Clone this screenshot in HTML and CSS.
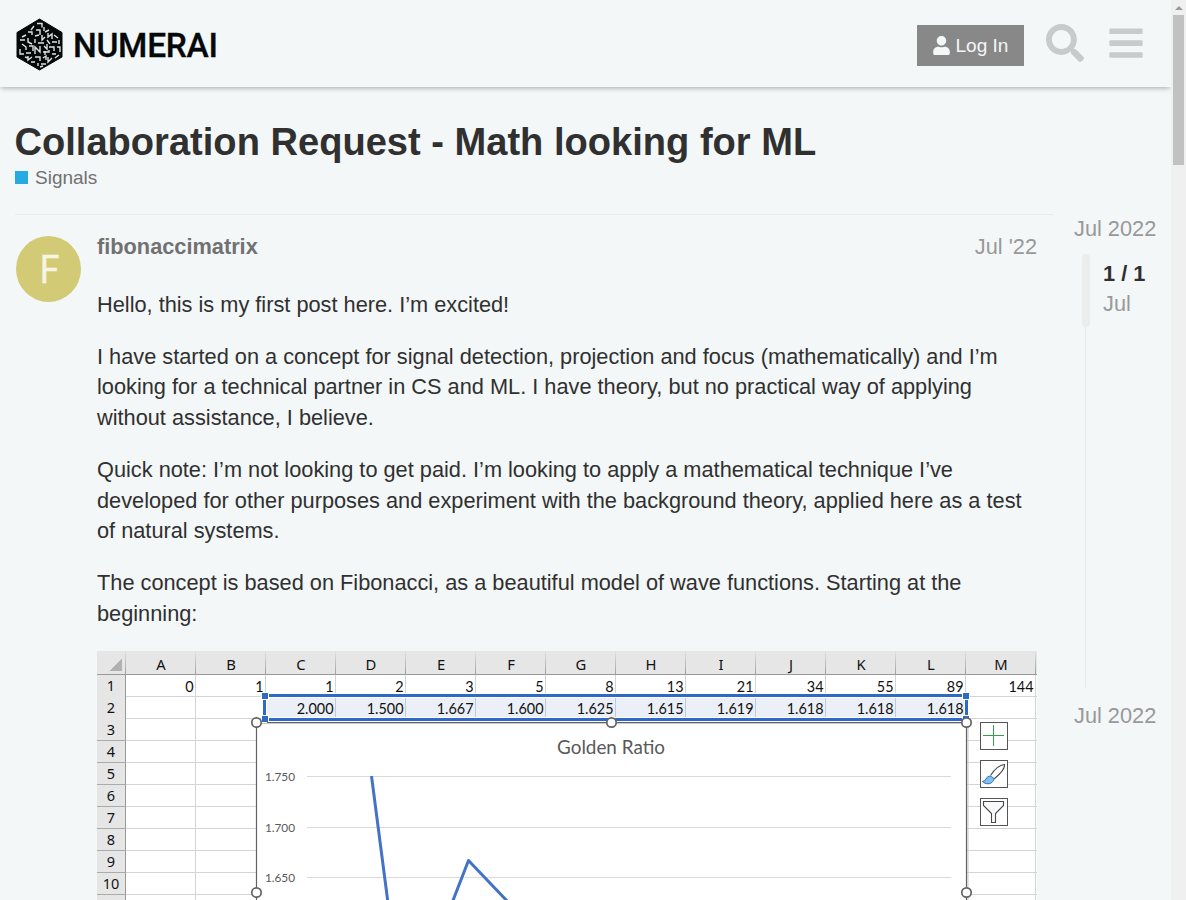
FILE: index.html
```html
<!DOCTYPE html>
<html lang="en">
<head>
<meta charset="utf-8">
<title>Collaboration Request - Math looking for ML</title>
<link rel="stylesheet" href="styles.css">
</head>
<body>
<div class="window">
  <div class="page">
    <header class="header">
      <svg class="logo" width="202" height="54" viewBox="0 0 202 54" role="img" aria-label="Numerai">
        <path d="M23.5 1 46 14.500V39L23.500 52 1 39V14.500Z" fill="#06090a" stroke="#06090a" stroke-width="1" stroke-linejoin="round"/>
        <path d="M21 5.500h5v4M18 8l-3 4M28 9v4M20 12h4v5M29 14l4-2M12 14h4v3M10 17l-4 2M19 18l4-1M32 15v4l4-3v5M38 17l4 3M26 17v5l3-3M4 22h5M12 20v4l4 2M19 21v4M22 25h6M31 22l3 4M36 24h5M43 22v4M6 26l4 3v3M13 28h4v5M19 36v-7l5 5v-6M28 28l3 3v-5M33 29h5v4M41 29h3v5M4 31v5h4M10 35h5M27 34h6v-2M29 37v-4M36 36h4M43 37l-4 3M12 38v4l4-3M19 39h5v4M27 40l3-2v4M32 39v5l4-4M15 44h4M22 45v3M25 46h5M9 39l3 1M24 49l3-1" fill="none" stroke="#dfe3e4" stroke-width="1.400"/>
        <text x="57" y="38.700" textLength="145" class="wordmark">NUMERAI</text>
      </svg>
      <div class="header-actions">
        <button class="login"><svg class="user-icon" viewBox="0 0 448 512"><path d="M224 256c70.700 0 128-57.300 128-128S294.700 0 224 0 96 57.300 96 128s57.300 128 128 128zm89.600 32h-16.700c-22.200 10.200-46.900 16-72.900 16s-50.600-5.800-72.900-16h-16.700C60.200 288 0 348.200 0 422.400V464c0 26.500 21.500 48 48 48h352c26.500 0 48-21.500 48-48v-41.600c0-74.200-60.200-134.400-134.400-134.400z"/></svg><span>Log In</span></button>
        <svg class="search-icon" viewBox="0 0 512 512"><path d="M505 442.700L405.300 343c-4.500-4.500-10.600-7-17-7H372c27.600-35.300 44-79.700 44-128C416 93.100 322.900 0 208 0S0 93.100 0 208s93.100 208 208 208c48.300 0 92.700-16.400 128-44v16.300c0 6.400 2.500 12.500 7 17l99.700 99.700c9.400 9.400 24.600 9.400 33.900 0l28.300-28.300c9.400-9.400 9.400-24.600.1-34zM208 336c-70.700 0-128-57.200-128-128 0-70.700 57.200-128 128-128 70.700 0 128 57.200 128 128 0 70.700-57.200 128-128 128z"/></svg>
        <svg class="menu-icon" viewBox="0 0 448 512"><rect y="60" width="448" height="76" rx="16"/><rect y="220" width="448" height="76" rx="16"/><rect y="380" width="448" height="76" rx="16"/></svg>
      </div>
    </header>
    <section class="topic-title">
      <h1>Collaboration Request - Math looking for ML</h1>
      <div class="category"><span class="category-badge"></span>Signals</div>
    </section>
    <div class="topic">
      <article class="post">
        <div class="avatar"><svg viewBox="0 0 66 66"><text x="34" y="47.500" text-anchor="middle" textLength="20" lengthAdjust="spacingAndGlyphs">F</text></svg></div>
        <div class="post-body">
          <div class="post-meta"><b>fibonaccimatrix</b><span>Jul '22</span></div>
          <div class="cooked">
            <p>Hello, this is my first post here. I’m excited!</p>
            <p>I have started on a concept for signal detection, projection and focus (mathematically) and I’m<br>looking for a technical partner in CS and ML. I have theory, but no practical way of applying<br>without assistance, I believe.</p>
            <p>Quick note: I’m not looking to get paid. I’m looking to apply a mathematical technique I’ve<br>developed for other purposes and experiment with the background theory, applied here as a test<br>of natural systems.</p>
            <p>The concept is based on Fibonacci, as a beautiful model of wave functions. Starting at the<br>beginning:</p>
          </div>
          <div class="sheet">
            <div class="row columns"><span class="corner"></span><span>A</span><span>B</span><span>C</span><span>D</span><span>E</span><span>F</span><span>G</span><span>H</span><span>I</span><span>J</span><span>K</span><span>L</span><span>M</span><i></i></div>
            <div class="row"><b>1</b><span>0</span><span>1</span><span>1</span><span>2</span><span>3</span><span>5</span><span>8</span><span>13</span><span>21</span><span>34</span><span>55</span><span>89</span><span>144</span></div>
            <div class="row ratios"><b>2</b><span></span><span></span><span>2.000</span><span>1.500</span><span>1.667</span><span>1.600</span><span>1.625</span><span>1.615</span><span>1.619</span><span>1.618</span><span>1.618</span><span>1.618</span><span></span></div>
            <div class="row"><b>3</b></div>
            <div class="row"><b>4</b></div>
            <div class="row"><b>5</b></div>
            <div class="row"><b>6</b></div>
            <div class="row"><b>7</b></div>
            <div class="row"><b>8</b></div>
            <div class="row"><b>9</b></div>
            <div class="row"><b>10</b></div>
            <div class="row"><b></b></div>
            <svg class="chart" width="940" height="249" viewBox="97 651 940 249">
              <rect x="257" y="723" width="710" height="190" fill="#fff"/>
              <path d="M257 723.500H967M968 723V900" stroke="#c8c8c8" fill="none"/>
              <path d="M256.500 900V722.500H966.500V900" stroke="#636363" stroke-width="1.200" fill="none"/>
              <path d="M307 776.500H951M307 827.500H951M307 877.500H951" stroke="#d9d9d9"/>
              <path d="M371.500 776 388 903M452 903 468.500 860.500 509 903" fill="none" stroke="#4472c4" stroke-width="3" stroke-linejoin="round"/>
              <text x="557" y="753.500" textLength="108" lengthAdjust="spacingAndGlyphs" class="chart-title">Golden Ratio</text>
              <g class="axis"><text x="265" y="781" textLength="30">1.750</text><text x="265" y="832" textLength="30">1.700</text><text x="265" y="882" textLength="30">1.650</text></g>
              <path d="M264.500 695.500H966.500V719.500H264.500Z" fill="none" stroke="#fff" stroke-width="5"/>
              <path d="M264.500 695.500H966.500V719.500H264.500Z" fill="none" stroke="#2f69c7" stroke-width="3"/>
              <g fill="#2f69c7" stroke="#fff"><rect x="261.500" y="692.500" width="7" height="7"/><rect x="962.500" y="692.500" width="7" height="7"/><rect x="261.500" y="715.500" width="7" height="7"/><rect x="962.500" y="715.500" width="7" height="7"/></g>
              <path d="M267 722.500H964" stroke="#636363"/>
              <g fill="#fff" stroke="#636363" stroke-width="1.700"><circle cx="256.500" cy="722.500" r="4.700"/><circle cx="611.500" cy="722.500" r="4.700"/><circle cx="966.500" cy="722.500" r="4.700"/><circle cx="256.500" cy="892.500" r="4.700"/><circle cx="966.500" cy="892.500" r="4.700"/></g>
              <g fill="#fff" stroke="#555"><rect x="980.500" y="722.500" width="27" height="27"/><rect x="980.500" y="760.500" width="27" height="27"/><rect x="980.500" y="798.500" width="27" height="27"/></g>
              <path d="M983 735.500H1004M993.500 725V746" stroke="#35a04b"/>
              <path d="M990.500 775.500C994 770 999.500 765 1004.500 764.500C1005 768.500 999 775 994 779" fill="#fff" stroke="#484848" stroke-width="1.100"/>
              <path d="M982.500 781.500C986.500 781.500 985.500 776.500 989.500 776.200C992.500 776 995 779 992.800 781.500C990.500 784.500 985.500 784.500 982.500 781.500Z" fill="#83beec" stroke="#1e6fb8"/>
              <path d="M983.500 801.500H1003.500V805.500L995.500 813.500V822.500H991.500V813.500L983.500 805.500Z" fill="#f8f9fb" stroke="#484848" stroke-width="1.100"/>
            </svg>
          </div>
        </div>
      </article>
      <aside class="timeline">
        <div class="date">Jul 2022</div>
        <div class="scrollarea"><span class="handle"></span><div class="progress"><b>1 / 1</b><span>Jul</span></div></div>
        <div class="date">Jul 2022</div>
      </aside>
    </div>
  </div>
  <div class="scrollbar"><span class="arrow"></span><span class="thumb"></span></div>
</div>
</body>
</html>
```

FILE: styles.css
```css
* { box-sizing: border-box; }
body { margin: 0; background: #f3f7f8; color: #303030; font-family: "Liberation Sans", Arial, sans-serif; font-size: 21.760px; line-height: 30.600px; }
.window { display: flex; height: 900px; overflow: hidden; }
.page { width: 1171px; height: 900px; overflow: hidden; }
.header { height: 87px; padding: 0 28px 0 16px; display: flex; justify-content: space-between; align-items: center; background: #f3f7f8; box-shadow: 0 2px 5px -1px rgba(0,0,0,.32); }
.logo { overflow: visible; margin-top: 2px; }
.wordmark { font: 500 33.500px Roboto, sans-serif; fill: #06090a; stroke: #06090a; stroke-width: .3px; }
.header-actions { display: flex; align-items: center; height: 87px; padding-top: 2px; }
.header-actions svg { fill: #c8cacb; display: block; }
.login { width: 107px; height: 41px; margin: 2px 22px 0 0; border: 0; padding: 0 0 0 16px; background: #888; color: #f3f7f8; font: 19.040px "Liberation Sans", Arial, sans-serif; display: flex; align-items: center; gap: 5.500px; }
.login .user-icon { width: 17px; height: 19px; fill: #f3f7f8; }
.login span { white-space: nowrap; }
.search-icon { width: 38px; height: 38px; margin: -3px 25px 0 0; }
.menu-icon { width: 34px; height: 38px; margin-top: -3px; }
.topic-title { height: 127px; padding: 33px 15px 0; }
h1 { margin: 0 0 0 -.5px; font-size: 38.080px; line-height: 44px; font-weight: 700; }
.category { display: flex; align-items: center; gap: 7px; color: #717171; font-size: 19px; line-height: 27px; }
.category-badge { width: 13px; height: 13px; background: #25aae2; }
.topic { display: flex; }
.post { width: 1038px; margin-left: 15px; border-top: 1px solid #e9ebec; display: flex; gap: 16px; padding: 17px 15px 0 1px; }
.avatar { flex: none; width: 65px; height: 66px; margin-top: 4px; border-radius: 50%; background: #d3ca76; }
.avatar svg { display: block; width: 65px; height: 66px; }
.avatar text { font: 40px Roboto, sans-serif; fill: #f6f4e3; stroke: #f6f4e3; stroke-width: .5px; }
.post-body { width: 940px; flex: none; }
.post-meta { display: flex; justify-content: space-between; color: #717171; line-height: 30px; height: 57.700px; }
.post-meta span { color: #999; }
.cooked { height: 361.300px; white-space: nowrap; }
p { margin: 0 0 21.500px; }
.sheet { position: relative; height: 249px; overflow: hidden; background: #fff; color: #111; font: 14.400px/22px Lato, "Open Sans", sans-serif; }
.row { display: grid; grid-template-columns: 29px repeat(13, 70px) 1px; height: 22px; }
.row b { font: 14.500px/21px "Noto Sans", sans-serif; text-align: center; background: #e6e6e6; border-right: 1px solid #999; border-bottom: 1px solid #ababab; }
.row:not(.columns) { background: repeating-linear-gradient(90deg, transparent 0 69px, #d4d4d4 69px 70px) 29px 0 / 910px 22px no-repeat, linear-gradient(#d4d4d4, #d4d4d4) 0 21px / 100% 1px no-repeat; }
.row span { text-align: right; padding-right: 2.500px; line-height: 23px; }
.columns { height: 24px; background: #e6e6e6; border-bottom: 1px solid #999; }
.columns span { text-align: center; padding: 2px 0 0 1px; font: 14.800px/22px "Noto Sans", sans-serif; border-right: 1px solid; border-image: linear-gradient(#e6e6e6, #999) 1; }
.columns .corner { background: linear-gradient(135deg, transparent 50%, #b1b1b1 50%) 12px 7px / 13px 13px no-repeat; }
.ratios span:nth-child(n+4):nth-child(-n+13) { background: #eaeff8; border-right: 1px solid #c4cad4; padding-right: 1.500px; }
.chart { position: absolute; inset: 0; }
.chart-title { font: 18.500px Lato, sans-serif; fill: #595959; }
.axis { font: 11.800px Lato, sans-serif; fill: #595959; }
.timeline { width: 118px; padding-left: 21px; color: #999; }
.date { line-height: 30px; white-space: nowrap; }
.scrollarea { margin: 10px 0 13px 11px; height: 434px; display: flex; gap: 13px; border-left: 1px solid #e7eaeb; }
.handle { width: 8px; height: 73px; margin-left: -4px; border-radius: 4px; background: #ebecec; flex: none; }
.progress { display: flex; flex-direction: column; line-height: 30px; padding-top: 5px; }
.progress b { color: #303030; }
.scrollbar { width: 15px; height: 900px; background: #f0f0f0; padding: 6px 2px 0; display: flex; flex-direction: column; align-items: center; }
.arrow { border: 4px solid transparent; border-top: 0; border-bottom-color: #9a9a9a; }
.thumb { width: 11px; height: 150px; margin-top: 5px; background: #c1c1c1; }
```
